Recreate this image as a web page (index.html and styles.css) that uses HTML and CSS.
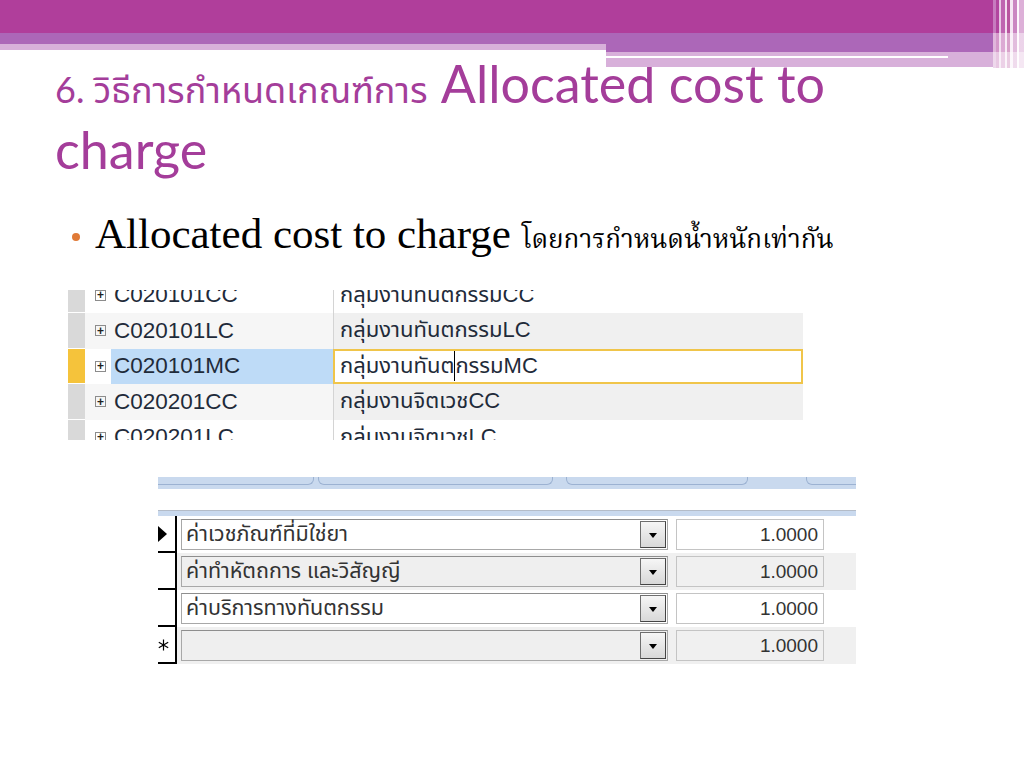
FILE: index.html
```html
<!DOCTYPE html>
<html lang="th">
<head>
    <meta charset="UTF-8">
    <title>6. วิธีการกำหนดเกณฑ์การ Allocated cost to charge</title>
    <link rel="stylesheet" href="styles.css">
</head>
<body>
<div class="slide">
    <header class="slide-top">
        <div class="top-band"></div>
        <div class="sub-bands">
            <div class="sub-left"></div>
            <div class="sub-right"><span class="sub-line"></span></div>
        </div>
        <div class="edge-stripes"></div>
    </header>

    <h1 class="slide-title"><span class="title-th">6. วิธีการกำหนดเกณฑ์การ</span> Allocated cost to charge</h1>

    <ul class="points">
        <li><span class="en">Allocated cost to charge</span> <span class="th">โดยการกำหนดน้ำหนักเท่ากัน</span></li>
    </ul>

    <div class="shot shot-groups">
        <div class="grp-row first">
            <div class="sel"></div>
            <div class="code"><span class="plus">+</span><span class="code-text">C020101CC</span></div>
            <div class="name">กลุ่มงานทันตกรรมCC</div>
        </div>
        <div class="grp-row alt">
            <div class="sel"></div>
            <div class="code"><span class="plus">+</span><span class="code-text">C020101LC</span></div>
            <div class="name">กลุ่มงานทันตกรรมLC</div>
        </div>
        <div class="grp-row current">
            <div class="sel"></div>
            <div class="code"><span class="plus">+</span><span class="code-text">C020101MC</span></div>
            <div class="name">กลุ่มงานทันต<span class="caret"></span>กรรมMC</div>
        </div>
        <div class="grp-row alt">
            <div class="sel"></div>
            <div class="code"><span class="plus">+</span><span class="code-text">C020201CC</span></div>
            <div class="name">กลุ่มงานจิตเวชCC</div>
        </div>
        <div class="grp-row">
            <div class="sel"></div>
            <div class="code"><span class="plus">+</span><span class="code-text">C020201LC</span></div>
            <div class="name">กลุ่มงานจิตเวชLC</div>
        </div>
    </div>

    <div class="shot shot-weights">
        <div class="tabs">
            <span class="tab tab-1"></span>
            <span class="tab tab-2"></span>
            <span class="tab tab-3"></span>
            <span class="tab tab-4"></span>
        </div>
        <div class="w-head"></div>
        <div class="w-row">
            <div class="w-sel"><span class="arrow"></span></div>
            <div class="combo"><span class="combo-text">ค่าเวชภัณฑ์ที่มิใช่ยา</span><span class="drop"></span></div>
            <div class="num">1.0000</div>
        </div>
        <div class="w-row alt">
            <div class="w-sel"></div>
            <div class="combo"><span class="combo-text">ค่าทำหัตถการ และวิสัญญี</span><span class="drop"></span></div>
            <div class="num">1.0000</div>
        </div>
        <div class="w-row">
            <div class="w-sel"></div>
            <div class="combo"><span class="combo-text">ค่าบริการทางทันตกรรม</span><span class="drop"></span></div>
            <div class="num">1.0000</div>
        </div>
        <div class="w-row alt">
            <div class="w-sel">
                <svg class="star" width="11" height="12" viewBox="0 0 11 12">
                    <path d="M5.5 0.5v11M0.8 3.2l9.4 5.6M0.8 8.8l9.4-5.6" stroke="#000" stroke-width="1.2" fill="none"/>
                </svg>
            </div>
            <div class="combo"><span class="combo-text"></span><span class="drop"></span></div>
            <div class="num">1.0000</div>
        </div>
    </div>
</div>
</body>
</html>
```

FILE: styles.css
```css
body {
    margin: 0;
    padding: 0;
    background-color: #fff;
    font-family: "Lato", "Noto Sans Thai", "Noto Sans", sans-serif;
}

.slide {
    width: 1024px;
    height: 768px;
    overflow: hidden;
}

/* slide theme bands at the top */
.slide-top {
    position: relative;
    height: 68px;
}

.top-band {
    height: 33px;
    background-color: #b03e9b;
}

.sub-bands {
    display: flex;
    height: 35px;
}

.sub-left {
    width: 606px;
    background: linear-gradient(#ac67b8 0 11px, #d8b0da 11px 17px, transparent 17px);
}

.sub-right {
    flex: 1;
    padding-top: 23px;
    background: linear-gradient(#ac67b8 0 19px, #d8b0da 19px 34px, transparent 34px);
}

.sub-line {
    display: block;
    width: 342px;
    height: 2px;
    background-color: #fff;
}

.edge-stripes {
    position: absolute;
    top: 0;
    right: 0;
    width: 31px;
    height: 68px;
    background:
        linear-gradient(rgba(255, 255, 255, 0) 0 33px, rgba(255, 255, 255, 0.45) 33px 52px, rgba(255, 255, 255, 0.7) 52px),
        linear-gradient(to right, #c77cbf 0 3px, #b2469f 3px 6px, #e7c6e4 6px 8px, #bf64b0 8px 12px, #f3dcef 12px 14px, #b9549f 14px 17px, #f6e6f4 17px 20px, #cb86c2 20px 24px, #fdf5fc 24px 26px, #ddb0d8 26px 31px);
}

/* title */
.slide-title {
    width: 800px;
    margin: -15px 0 0 55px;
    font-size: 52px;
    line-height: 60px;
    font-weight: normal;
    color: #a43d9a;
}

.title-th {
    font-size: 36px;
}

/* bullet */
.points {
    list-style: none;
    margin: 32px 0 0 72px;
    padding: 0;
}

.points li {
    font-family: "Liberation Serif", serif;
    font-size: 43px;
    line-height: 46px;
    color: #000;
}

.points li::before {
    content: "";
    display: inline-block;
    width: 8px;
    height: 8px;
    margin-right: 15px;
    border-radius: 50%;
    background-color: #e07a37;
    vertical-align: 7px;
}

.points .th {
    font-family: "Liberation Serif", "Noto Serif Thai", serif;
    font-size: 26px;
}

/* screenshot 1 : cost centre list */
.shot {
    overflow: hidden;
    font-family: "Liberation Sans", "Noto Sans Thai", sans-serif;
}

.shot-groups {
    width: 735px;
    height: 150px;
    margin: 27px 0 0 68px;
}

.grp-row {
    display: flex;
    height: 35.5px;
    font-size: 22.5px;
    color: #1f2b3a;
}

.grp-row.first {
    margin-top: -12.5px;
}

.grp-row .sel {
    width: 17px;
    background-color: #d9d9d9;
    border-bottom: 1px solid #fff;
    box-sizing: border-box;
}

.grp-row.current .sel {
    background-color: #f5c33b;
}

.code {
    display: flex;
    align-items: center;
    width: 248px;
    padding-left: 10px;
    box-sizing: border-box;
    background-color: #fff;
}

.plus {
    display: flex;
    align-items: center;
    justify-content: center;
    width: 11px;
    height: 11px;
    border: 1px solid #8c8c8c;
    font-size: 12px;
    line-height: 1;
    font-weight: bold;
    color: #222;
    box-sizing: border-box;
}

.code-text {
    display: flex;
    align-items: center;
    align-self: stretch;
    flex: 1;
    margin-left: 5px;
    padding-left: 3px;
}

.grp-row.current .code-text {
    background-color: #bedbf7;
}

.name {
    display: flex;
    align-items: center;
    flex: 1;
    padding-left: 6px;
    border-left: 1px solid #d4d4d4;
    background-color: #fff;
    font-size: 22px;
}

.grp-row.alt .code {
    background-color: #f6f6f6;
}

.grp-row.alt .name {
    background-color: #f0f0f0;
}

.grp-row.current .name {
    border: 2px solid #f0c54a;
    padding-left: 5px;
}

.caret {
    display: inline-block;
    width: 1px;
    height: 30px;
    background-color: #000;
}

/* screenshot 2 : weights sub form */
.shot-weights {
    width: 698px;
    height: 190px;
    margin: 37px 0 0 158px;
}

.tabs {
    position: relative;
    height: 12px;
    background-color: #c9d9ee;
}

.tab {
    position: absolute;
    top: 0;
    height: 7px;
    border: 1px solid #9cb2d2;
    border-top: none;
    border-radius: 0 0 6px 6px;
}

.tab-1 { left: -10px; width: 164px; }
.tab-2 { left: 160px; width: 233px; }
.tab-3 { left: 408px; width: 180px; }
.tab-4 { left: 648px; width: 80px; }

.w-head {
    height: 5px;
    margin-top: 21px;
    border-top: 1px solid #b4bcc8;
    background-color: #c9d9ee;
}

.w-row {
    display: flex;
    align-items: center;
    height: 37px;
    font-size: 21.5px;
    color: #333;
}

.w-row.alt {
    background-color: #f0f0f0;
}

.w-sel {
    display: flex;
    align-items: center;
    align-self: stretch;
    width: 19px;
    border-right: 2px solid #000;
    border-bottom: 2px solid #000;
    background-color: #fff;
    box-sizing: border-box;
}

.arrow {
    width: 0;
    height: 0;
    border-top: 8px solid transparent;
    border-bottom: 8px solid transparent;
    border-left: 9px solid #000;
}

.combo {
    display: flex;
    align-items: center;
    width: 487px;
    height: 31px;
    margin-left: 4px;
    padding: 0 1px 0 4px;
    border: 1px solid #a8a8a8;
    border-top-color: #8e8e8e;
    box-sizing: border-box;
    background-color: #fff;
}

.w-row.alt .combo {
    background-color: #efefef;
}

.combo-text {
    flex: 1;
}

.drop {
    position: relative;
    width: 26px;
    height: 27px;
    border: 1px solid #6e6e6e;
    border-right-color: #444;
    border-bottom-color: #444;
    box-sizing: border-box;
    background: linear-gradient(#f6f6f6, #d8d8d8);
}

.drop::after {
    content: "";
    position: absolute;
    left: 8px;
    top: 11px;
    border-left: 4px solid transparent;
    border-right: 4px solid transparent;
    border-top: 5px solid #000;
}

.num {
    width: 148px;
    height: 31px;
    margin-left: 8px;
    padding-right: 5px;
    border: 1px solid #c4c4c4;
    box-sizing: border-box;
    background-color: #fff;
    text-align: right;
    font-size: 19px;
    line-height: 29px;
}

.w-row.alt .num {
    background-color: #f0f0f0;
}
```
